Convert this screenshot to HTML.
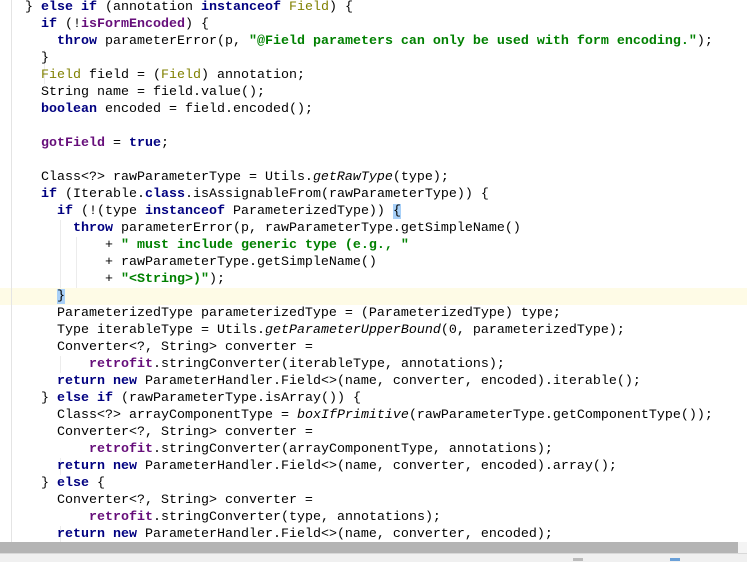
<!DOCTYPE html>
<html><head><meta charset="utf-8"><style>
html,body{margin:0;padding:0;width:747px;height:561px;overflow:hidden;background:#fff;}
.code{position:absolute;left:25px;top:-1.5px;margin:0;font-family:"Liberation Mono","DejaVu Sans Mono",monospace;font-size:13.33px;line-height:17px;color:#000;white-space:pre;}
.k{color:#000080;font-weight:bold;}
.s{color:#008000;font-weight:bold;}
.a{color:#808000;}
.p{color:#660e7a;font-weight:bold;}
.i{font-style:italic;}
.b{background:#a8d0f8;}
.hl{position:absolute;left:0;top:287.5px;width:747px;height:17px;background:#fefbe6;}
.g{position:absolute;top:0;width:1px;background:#ececec;}
</style></head><body>
<div class="hl"></div>
<div class="g" style="left:11px;height:561px;background:#e4e4e4"></div>
<div class="g" style="left:44px;top:50px;height:34px"></div>
<div class="g" style="left:60px;top:220px;height:68px"></div>
<div class="g" style="left:76px;top:237px;height:51px"></div>
<div class="g" style="left:60px;top:356px;height:17px"></div>
<div class="g" style="left:60px;top:458px;height:17px"></div>
<div class="g" style="left:60px;top:526px;height:17px"></div>
<pre class="code">} <span class="k">else if</span> (annotation <span class="k">instanceof</span> <span class="a">Field</span>) {
  <span class="k">if</span> (!<span class="p">isFormEncoded</span>) {
    <span class="k">throw</span> parameterError(p, <span class="s">"@Field parameters can only be used with form encoding."</span>);
  }
  <span class="a">Field</span> field = (<span class="a">Field</span>) annotation;
  String name = field.value();
  <span class="k">boolean</span> encoded = field.encoded();

  <span class="p">gotField</span> = <span class="k">true</span>;

  Class&lt;?&gt; rawParameterType = Utils.<span class="i">getRawType</span>(type);
  <span class="k">if</span> (Iterable.<span class="k">class</span>.isAssignableFrom(rawParameterType)) {
    <span class="k">if</span> (!(type <span class="k">instanceof</span> ParameterizedType)) <span class="b">{</span>
      <span class="k">throw</span> parameterError(p, rawParameterType.getSimpleName()
          + <span class="s">" must include generic type (e.g., "</span>
          + rawParameterType.getSimpleName()
          + <span class="s">"&lt;String&gt;)"</span>);
    <span class="b">}</span>
    ParameterizedType parameterizedType = (ParameterizedType) type;
    Type iterableType = Utils.<span class="i">getParameterUpperBound</span>(0, parameterizedType);
    Converter&lt;?, String&gt; converter =
        <span class="p">retrofit</span>.stringConverter(iterableType, annotations);
    <span class="k">return new</span> ParameterHandler.Field&lt;&gt;(name, converter, encoded).iterable();
  } <span class="k">else if</span> (rawParameterType.isArray()) {
    Class&lt;?&gt; arrayComponentType = <span class="i">boxIfPrimitive</span>(rawParameterType.getComponentType());
    Converter&lt;?, String&gt; converter =
        <span class="p">retrofit</span>.stringConverter(arrayComponentType, annotations);
    <span class="k">return new</span> ParameterHandler.Field&lt;&gt;(name, converter, encoded).array();
  } <span class="k">else</span> {
    Converter&lt;?, String&gt; converter =
        <span class="p">retrofit</span>.stringConverter(type, annotations);
    <span class="k">return new</span> ParameterHandler.Field&lt;&gt;(name, converter, encoded);
  }</pre>
<div style="position:absolute;left:0;top:542px;width:738px;height:11px;background:#b4b4b4"></div>
<div style="position:absolute;left:738px;top:542px;width:9px;height:11px;background:#f4f4f4"></div>
<div style="position:absolute;left:0;top:553px;width:747px;height:8px;background:#f0f0f0;border-top:1px solid #d8d8d8"></div>
<div style="position:absolute;left:573px;top:558px;width:10px;height:3px;background:#bbb"></div>
<div style="position:absolute;left:670px;top:558px;width:10px;height:3px;background:#6aa0d8"></div>
</body></html>
